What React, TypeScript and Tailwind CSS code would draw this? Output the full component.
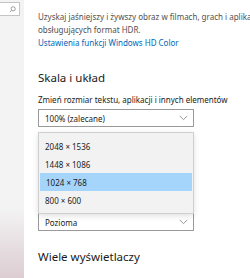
import React from 'react';

const resolutions = ['2048 × 1536', '1448 × 1086', '1024 × 768', '800 × 600'];

const Chevron: React.FC = () => (
  <svg width="9" height="6" viewBox="0 0 9 6" fill="none" className="shrink-0">
    <path d="M0.8 1 L4.5 4.6 L8.2 1" stroke="#8a8a8a" strokeWidth="0.9" />
  </svg>
);

const Dropdown: React.FC<{ value: string; className?: string }> = ({ value, className }) => (
  <div className={`flex items-center justify-between w-[156px] border border-[#9a9a9a] bg-white pl-[6px] pr-[5px] text-[8px] text-[#222] ${className ?? ''}`}>
    <span>{value}</span>
    <Chevron />
  </div>
);

export default function App() {
  return (
    <div className="flex w-[250px] h-[278px] overflow-hidden bg-white font-['Noto_Sans',sans-serif]">
      {/* sidebar */}
      <div className="relative w-[24px] shrink-0 h-full bg-gradient-to-b from-[#f3f3f3] via-[#f3f3f3] via-75% to-[#dccdd2]">
        <div className="mt-[2px] flex h-[14px] w-[20px] items-center justify-end border border-l-0 border-[#c4c4c4] bg-white pr-[3px]">
          <svg width="7" height="7" viewBox="0 0 7 7" fill="none">
            <circle cx="4.2" cy="2.8" r="2.1" stroke="#888" strokeWidth="0.8" />
            <path d="M2.7 4.3 L0.8 6.2" stroke="#888" strokeWidth="0.8" />
          </svg>
        </div>
      </div>

      {/* content */}
      <div className="flex-1 min-w-0 overflow-hidden pl-[14px] pt-[10px] text-[8px] leading-[13px] text-[#505050] whitespace-nowrap">
        <p>Uzyskaj jaśniejszy i żywszy obraz w filmach, grach i aplikacjach</p>
        <p>obsługujących format HDR.</p>
        <p className="text-[#0067b8]">Ustawienia funkcji Windows HD Color</p>

        <h2 className="mt-[20px] text-[11.5px] leading-[18px] text-[#1a1a1a]">Skala i układ</h2>

        <p className="mt-[6px] text-[#222]">Zmień rozmiar tekstu, aplikacji i innych elementów</p>
        <Dropdown value="100% (zalecane)" className="mt-[3px] h-[18px]" />

        <div className="relative h-[86px]">
          <div className="absolute left-0 top-[5px] w-[156px] border border-[#cfcfcf] bg-[#f2f2f2] py-[4px] shadow-[0_2px_6px_rgba(0,0,0,0.12)]">
            {resolutions.map((r) => (
              <div
                key={r}
                className={`flex h-[18px] items-center pl-[6px] text-[8px] text-[#222] ${r === '1024 × 768' ? 'bg-[#a6d5fb] mx-[1px] pl-[5px]' : ''}`}
              >
                {r}
              </div>
            ))}
          </div>
        </div>

        <Dropdown value="Pozioma" className="h-[18px]" />

        <h2 className="mt-[17px] text-[11.5px] leading-[18px] text-[#1a1a1a]">Wiele wyświetlaczy</h2>
      </div>
    </div>
  );
}
